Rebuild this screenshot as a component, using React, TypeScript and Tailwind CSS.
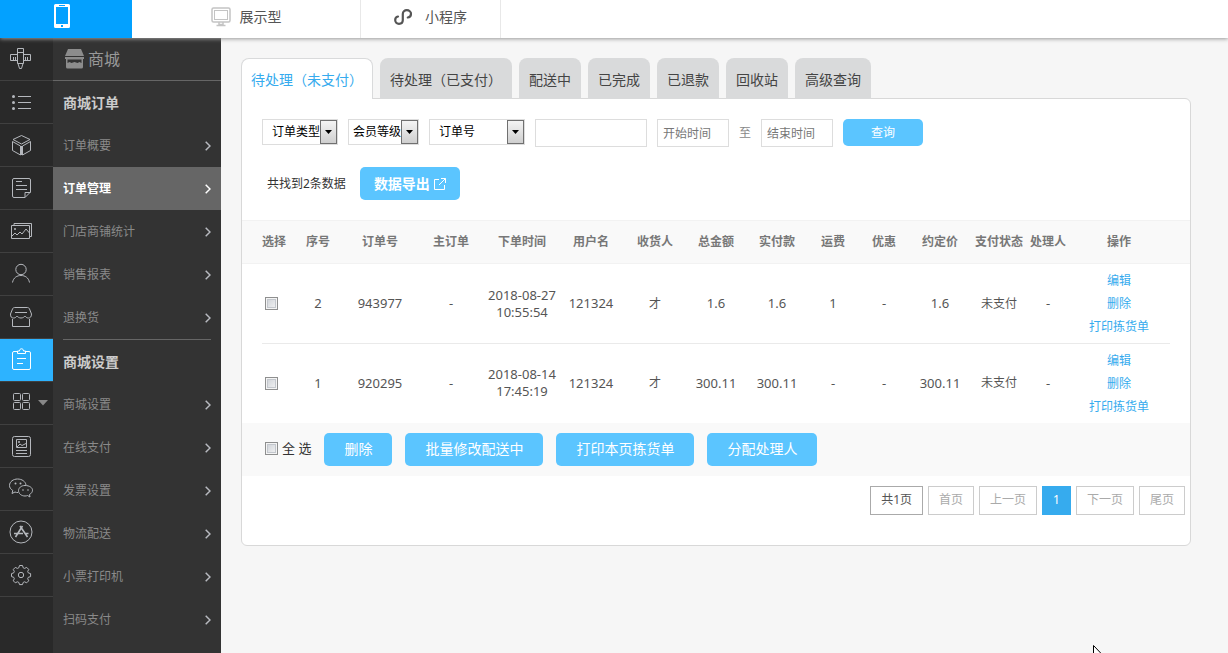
import React, { ReactNode } from "react";

function Icon({ children, className = "" }: { children: ReactNode; className?: string }) {
  return (
    <svg
      width="24"
      height="24"
      viewBox="0 0 24 24"
      fill="none"
      stroke="currentColor"
      strokeWidth="1"
      aria-hidden="true"
      className={className}
    >
      {children}
    </svg>
  );
}

const railItems: { label: string; icon: ReactNode }[] = [
  {
    label: "装修",
    icon: (
      <Icon>
        <path d="M8.500 1.500h6v15h-6zM8.500 5.500h6M8.500 7.500h-7v6h7M14.500 7.500h7v6h-7M4.500 10v3M6.500 10v3M16.500 10v3M18.500 10v3M9 16.500l1.500 5h2l1.500-5" />
      </Icon>
    ),
  },
  {
    label: "列表",
    icon: (
      <Icon>
        <path d="M9 6.500h13M9 12.500h13M9 18.500h13" />
        <g fill="currentColor" stroke="none">
          <circle cx="4.500" cy="6.500" r="1.500" />
          <circle cx="4.500" cy="12.500" r="1.500" />
          <circle cx="4.500" cy="18.500" r="1.500" />
        </g>
      </Icon>
    ),
  },
  {
    label: "产品",
    icon: (
      <Icon>
        <path d="M12.500 2.500l8.500 4-8.500 4.500L4 6.500zM3.500 8.500l8 4.500v9l-8-4.500zM21.500 8.500l-8 4.500v9l8-4.500zM12.500 13v9" />
      </Icon>
    ),
  },
  {
    label: "文章",
    icon: (
      <Icon>
        <path d="M5 2.500h15a1.500 1.500 0 0 1 1.500 1.500v12l-5.500 5.500H5A1.500 1.500 0 0 1 3.500 20V4A1.500 1.500 0 0 1 5 2.500zM7 5.500h6M7 9.500h11M7 13.500h11M16 21.500v-5h5.500" />
      </Icon>
    ),
  },
  {
    label: "图片",
    icon: (
      <Icon>
        <path d="M2.500 6.500h18v13h-18zM5 6V4.500h17.500v13H21M3 17l3-3 2 2 3-3 2 2 4-5 3.500 4" />
        <circle cx="6" cy="10" r="1" fill="currentColor" stroke="none" />
      </Icon>
    ),
  },
  {
    label: "会员",
    icon: (
      <Icon>
        <circle cx="12" cy="7.500" r="5.200" />
        <path d="M3.500 20.500c1-5 4.500-7 8.500-7s7.500 2 8.500 7" />
      </Icon>
    ),
  },
  {
    label: "门店",
    icon: (
      <Icon>
        <path d="M5.500 2.500h13c1 0 1.500.5 2 1.500l2 5c0 3-1.500 4-3 4-2 0-2.500-1-3.500-2-1 1-2 2-4 2s-3-1-4-2c-1 1-1.500 2-3.500 2s-3-1-3-4l2-5c.5-1 1-1.500 2-1.500zM6 7.500h12M3.500 14v7.500h17V14" />
      </Icon>
    ),
  },
  {
    label: "商城",
    icon: (
      <Icon>
        <path d="M8 3.500H5A1.500 1.500 0 0 0 3.500 5v15A1.500 1.500 0 0 0 5 21.500h15a1.500 1.500 0 0 0 1.500-1.500V5A1.500 1.500 0 0 0 20 3.500h-3M8.500 5.500V3h2c0-3 4-3 4 0h2v2.500zM8 10.500h9M8 15.500h6" />
      </Icon>
    ),
  },
  {
    label: "应用",
    icon: (
      <Icon>
        <rect x="4.500" y="2.500" width="7" height="7" rx="1" />
        <rect x="13.500" y="2.500" width="7" height="7" rx="1" />
        <rect x="4.500" y="11.500" width="7" height="7" rx="1" />
        <rect x="13.500" y="11.500" width="7" height="7" rx="1" />
      </Icon>
    ),
  },
  {
    label: "页面",
    icon: (
      <Icon>
        <rect x="3.500" y="2.500" width="18" height="20" rx="2" />
        <path d="M7.500 5.500h10v8h-10zM8 13l3-3 2 1.500 4-2M7 16.500h11M7 19.500h11" />
        <circle cx="10" cy="8" r="1" fill="currentColor" stroke="none" />
      </Icon>
    ),
  },
  {
    label: "微信",
    icon: (
      <Icon>
        <path d="M9 15.500c-1 0-2 0-3-.5l-3 1.500.8-3C1.500 12 .5 10.500.5 8.500c0-4 4-6.500 8-6.500 4.500 0 8 2.500 8.500 6" />
        <path d="M16 8.500c-4 0-6.500 2.500-6.500 5.200s2.700 5.300 6.500 5.300c1 0 1.800-.2 2.500-.5l2.500 1.500-.5-2.500c1.800-1 3-2.500 3-4.300 0-2.500-3-4.700-7.500-4.700z" />
        <g fill="currentColor" stroke="none">
          <circle cx="6.500" cy="6.500" r="1" />
          <circle cx="11.500" cy="6.500" r="1" />
          <circle cx="14" cy="13" r=".8" />
          <circle cx="19" cy="13" r=".8" />
        </g>
      </Icon>
    ),
  },
  {
    label: "APP",
    icon: (
      <Icon>
        <circle cx="12" cy="12" r="11" />
        <path d="M11 6l7.500 11M13.500 6L6.500 17M5 13.500h9M16.500 13.500h3" strokeWidth="1.600" />
      </Icon>
    ),
  },
  {
    label: "设置",
    icon: (
      <Icon>
        <circle cx="12" cy="12" r="2.700" />
        <path d="M10.500 2.500h3l.7 2.300 1.300.6 2.200-1 2 2-1 2.100.6 1.400 2.300.7v3l-2.300.7-.6 1.400 1 2.100-2 2-2.200-1-1.300.6-.7 2.200h-3l-.7-2.200-1.400-.6-2.100 1-2-2 1-2.100-.6-1.400-2.200-.7v-3l2.200-.7.6-1.400-1-2.100 2-2 2.100 1 1.400-.6z" />
      </Icon>
    ),
  },
];

function Rail() {
  return (
    <nav aria-label="主导航" className="w-[53px] shrink-0 bg-[#292929]">
      {railItems.map((item) => (
        <a
          key={item.label}
          href="#"
          aria-label={item.label}
          className={
            item.label === "商城"
              ? "flex h-[43px] items-center gap-[5px] border-b border-[#404040] bg-[#2db3ff] pl-[9px] text-white"
              : "flex h-[43px] items-center gap-[5px] border-b border-[#404040] pl-[9px] text-[#b5b8bd]"
          }
        >
          {item.icon}
          {item.label === "应用" && (
            <svg width="10" height="6" viewBox="0 0 10 6" aria-hidden="true" className="shrink-0">
              <path d="M0 0h10L5 5.500z" fill="#888" />
            </svg>
          )}
        </a>
      ))}
    </nav>
  );
}

function MenuLink({ label, active = false }: { label: string; active?: boolean }) {
  return (
    <a
      href="#"
      className={
        active
          ? "flex h-[43px] items-center justify-between bg-[#666] px-[10px] font-bold text-white"
          : "flex h-[43px] items-center justify-between px-[10px] text-[#8a8a8a]"
      }
    >
      {label}
      <svg
        width="6"
        height="10"
        viewBox="0 0 6 10"
        fill="none"
        stroke="currentColor"
        strokeWidth="1.500"
        aria-hidden="true"
        className={active ? "text-white" : "text-[#b8bac0]"}
      >
        <path d="M.7.7L5 5 .7 9.300" />
      </svg>
    </a>
  );
}

const orderMenu = ["订单概要", "订单管理", "门店商铺统计", "销售报表", "退换货"];
const settingMenu = ["商城设置", "在线支付", "发票设置", "物流配送", "小票打印机", "扫码支付"];

function SubMenu() {
  return (
    <aside className="w-[168px] shrink-0 bg-[#333] text-xs">
      <div className="flex h-[43px] items-center gap-1 border-b border-[#666] pl-3 text-base text-[#999]">
        <svg width="19" height="20" viewBox="0 0 19 20" aria-hidden="true">
          <path
            d="M3 0h13l3 7H0zM0 8h19v2h-1v8a1.500 1.500 0 0 1-1.500 1.500h-14A1.500 1.500 0 0 1 1 18v-8H0z"
            fill="#8c8c8c"
          />
          <path d="M2.500 14v-3.500h14V14l-2-1-2 1-3-1-3 1-2-1z" fill="#333" />
        </svg>
        商城
      </div>
      <h2 className="flex h-[43px] items-center pl-[10px] text-sm font-bold text-[#ccc]">商城订单</h2>
      {orderMenu.map((label) => (
        <MenuLink key={label} label={label} active={label === "订单管理"} />
      ))}
      <hr className="mx-[10px] border-[#666]" />
      <h2 className="flex h-[43px] items-center pl-[10px] text-sm font-bold text-[#ccc]">商城设置</h2>
      {settingMenu.map((label) => (
        <MenuLink key={label} label={label} />
      ))}
    </aside>
  );
}

function TopBar() {
  return (
    <header className="relative z-10 flex h-[38px] bg-white text-sm text-[#555] shadow-[0_1px_4px_#999]">
      <a href="#" aria-label="手机版" className="flex w-[132px] justify-center bg-[#03a1ff] pr-2 pt-1">
        <svg width="16" height="24" viewBox="0 0 16 24" aria-hidden="true">
          <path
            fill="#fff"
            fillRule="evenodd"
            d="M1.500 0h13A1.500 1.500 0 0 1 16 1.500v21a1.500 1.500 0 0 1-1.500 1.500h-13A1.500 1.500 0 0 1 0 22.500v-21A1.500 1.500 0 0 1 1.500 0zM2 3v17h12V3zM5 1v1h6V1zM7 21v2h2v-2z"
          />
        </svg>
      </a>
      <a href="#" className="flex w-[229px] items-center justify-center gap-[9px] border-r border-[#e8e8e8] pb-1">
        <svg width="20" height="20" viewBox="0 0 20 20" fill="none" stroke="#c4c4c4" aria-hidden="true">
          <rect x="1" y="1" width="18" height="14" rx="1.500" strokeWidth="1.500" />
          <rect x="3.500" y="3.500" width="13" height="9" />
          <path d="M8 15v2.500h4V15M5.500 18.500h9" strokeWidth="1.500" />
        </svg>
        展示型
      </a>
      <a href="#" className="flex w-[140px] items-center justify-center gap-[13px] border-r border-[#e8e8e8] pb-1">
        <svg
          width="18"
          height="16"
          viewBox="0 0 18 16"
          fill="none"
          stroke="#555"
          strokeWidth="2.200"
          strokeLinecap="round"
          aria-hidden="true"
        >
          <path d="M4 7.500C2.300 7.800 1.200 9 1.200 11c0 2 1.600 3.800 3.800 3.800S8.800 13.200 8.800 11V5c0-2.200 1.700-3.800 4-3.800S17 2.800 17 4.800s-1.500 3.500-3.200 3.700" />
        </svg>
        小程序
      </a>
    </header>
  );
}

const tabs = ["待处理（未支付）", "待处理（已支付）", "配送中", "已完成", "已退款", "回收站", "高级查询"];

function SelectBox({ label, className }: { label: string; className: string }) {
  return (
    <div className="relative">
      <select
        aria-label={label}
        className={"block h-[26px] appearance-none border border-[#ddd] bg-white text-black outline-none " + className}
      >
        <option>{label}</option>
      </select>
      <span className="pointer-events-none absolute bottom-px right-px top-px flex w-[17px] items-center justify-center border border-[#707070] bg-linear-to-b from-[#f4f4f4] to-[#cfcfcf]">
        <svg width="7" height="4" viewBox="0 0 7 4" aria-hidden="true">
          <path d="M0 0h7L3.500 4z" fill="#000" />
        </svg>
      </span>
    </div>
  );
}

function CheckBox({ label }: { label: string }) {
  return (
    <input
      type="checkbox"
      aria-label={label}
      className="block size-[13px] appearance-none border border-[#8e8f8f] bg-linear-to-br from-[#cbcfd5] to-[#f6f6f6] shadow-[inset_0_0_0_1px_#f4f4f4,inset_0_0_0_2px_#c3c7cd]"
    />
  );
}

const columns: { title: string; className: string }[] = [
  { title: "选择", className: "w-[30px]" },
  { title: "序号", className: "w-[52px]" },
  { title: "订单号", className: "w-[72px]" },
  { title: "主订单", className: "w-[70px]" },
  { title: "下单时间", className: "w-[72px]" },
  { title: "用户名", className: "w-[66px]" },
  { title: "收货人", className: "w-[62px]" },
  { title: "总金额", className: "w-[60px]" },
  { title: "实付款", className: "w-[62px]" },
  { title: "运费", className: "w-[50px]" },
  { title: "优惠", className: "w-[52px]" },
  { title: "约定价", className: "w-[60px]" },
  { title: "支付状态", className: "w-[58px]" },
  { title: "处理人", className: "w-[40px]" },
  { title: "操作", className: "w-[102px]" },
];

const orders: string[][] = [
  ["2", "943977", "-", "2018-08-27 10:55:54", "121324", "才", "1.6", "1.6", "1", "-", "1.6", "未支付", "-"],
  ["1", "920295", "-", "2018-08-14 17:45:19", "121324", "才", "300.11", "300.11", "-", "-", "300.11", "未支付", "-"],
];

function OrderTable() {
  return (
    <table className="w-full table-fixed border-collapse text-center text-xs text-[#555]">
      <colgroup>
        <col className="w-5" />
        {columns.map((c) => (
          <col key={c.title} className={c.className} />
        ))}
        <col className="w-5" />
      </colgroup>
      <thead>
        <tr className="h-[43px] border-y border-[#f2f2f2] bg-[#f9f9f9] text-[#777]">
          <td />
          {columns.map((c) => (
            <th key={c.title} scope="col" className="whitespace-nowrap p-0 font-bold first-of-type:text-left">
              {c.title}
            </th>
          ))}
          <td />
        </tr>
      </thead>
      <tbody>
        {orders.map((row) => (
          <tr key={row[1]} className="group h-20 last:h-[79px]">
            <td />
            <td className="border-b border-[#eaeaea] py-0 pl-[3px] pr-0 group-last:border-0">
              <CheckBox label={"选择订单 " + row[1]} />
            </td>
            {row.map((cell, i) => (
              <td
                key={i}
                className={
                  /^[\d.: -]+$/.test(cell)
                    ? "border-b border-[#eaeaea] p-0 text-[13px] leading-[17px] group-last:border-0"
                    : "border-b border-[#eaeaea] p-0 group-last:border-0"
                }
              >
                {cell}
              </td>
            ))}
            <td className="border-b border-[#eaeaea] p-0 leading-[23px] text-[#36abee] group-last:border-0">
              <a href="#" className="block">编辑</a>
              <a href="#" className="block">删除</a>
              <a href="#" className="block">打印拣货单</a>
            </td>
            <td />
          </tr>
        ))}
      </tbody>
    </table>
  );
}

const pages: { label: string; className: string }[] = [
  { label: "首页", className: "border-[#ccc] bg-white text-[#aaa]" },
  { label: "上一页", className: "border-[#ccc] bg-white text-[#aaa]" },
  { label: "1", className: "border-[#36abee] bg-[#36abee] text-white" },
  { label: "下一页", className: "border-[#ccc] bg-white text-[#aaa]" },
  { label: "尾页", className: "border-[#ccc] bg-white text-[#aaa]" },
];

const actions = ["删除", "批量修改配送中", "打印本页拣货单", "分配处理人"];

function Main() {
  return (
    <main className="min-w-0 flex-1 pb-10 pl-5 pr-[37px] pt-5">
      <div role="tablist" className="-mb-px flex gap-[7px] text-sm">
        {tabs.map((tab, i) => (
          <button
            key={tab}
            type="button"
            role="tab"
            aria-selected={i === 0}
            className={
              i === 0
                ? "relative h-[41px] whitespace-nowrap rounded-t-lg border border-b-0 border-[#d9dadb] bg-white px-[9px] pt-px text-[#36abee]"
                : "h-[41px] whitespace-nowrap rounded-t-lg bg-[#d9dadb] px-[10px] pt-0.5 text-[#444]"
            }
          >
            {tab}
          </button>
        ))}
      </div>
      <section className="rounded-md rounded-tl-none border border-[#d8d8d8] bg-white pb-[30px] text-xs">
        <form className="flex items-start gap-[10px] px-5 pt-5">
          <SelectBox label="订单类型" className="w-[76px] pl-[9px]" />
          <SelectBox label="会员等级" className="w-[71px] pl-1" />
          <SelectBox label="订单号" className="w-24 pl-[9px]" />
          <input type="text" aria-label="关键词" className="h-7 w-28 border border-[#ddd] px-[5px] outline-none" />
          <input
            type="text"
            aria-label="开始时间"
            placeholder="开始时间"
            className="h-7 w-[72px] border border-[#ddd] px-[5px] outline-none placeholder:text-[#777]"
          />
          <span className="leading-7 text-[#888]">至</span>
          <input
            type="text"
            aria-label="结束时间"
            placeholder="结束时间"
            className="h-7 w-[72px] border border-[#ddd] px-[5px] outline-none placeholder:text-[#777]"
          />
          <button type="button" className="h-[27px] w-20 rounded-[5px] bg-[#5bc5ff] text-white">
            查询
          </button>
        </form>
        <div className="mt-5 flex items-center gap-[14px] pl-[25px]">
          <span className="text-[#333]">共找到2条数据</span>
          <button
            type="button"
            className="flex h-[33px] w-[100px] items-center justify-center gap-1 rounded-[5px] bg-[#5bc5ff] text-sm font-bold text-white"
          >
            数据导出
            <svg
              width="12"
              height="12"
              viewBox="0 0 12 12"
              fill="none"
              stroke="currentColor"
              aria-hidden="true"
            >
              <path d="M5 1.500H.5v10h10V7M7 .5h4.500V5M11.500.5L5 7" />
            </svg>
          </button>
        </div>
        <div className="mt-5">
          <OrderTable />
        </div>
        <div className="flex h-[53px] items-center bg-[#f9f9f9] pl-[23px]">
          <label className="mr-[13px] flex items-center gap-1 text-[13px] text-[#333]">
            <CheckBox label="全选" />
            全 选
          </label>
          <div className="flex gap-[13px]">
            {actions.map((label) => (
              <button key={label} type="button" className="h-[33px] rounded-[5px] bg-[#5bc5ff] px-5 text-sm text-white">
                {label}
              </button>
            ))}
          </div>
        </div>
        <nav aria-label="分页" className="mt-[10px] flex justify-end gap-[5px] pr-[5px]">
          <span className="flex h-[29px] items-center border border-[#aaa] px-[10px] text-[#555]">共1页</span>
          {pages.map((p) => (
            <a key={p.label} href="#" className={"flex h-[29px] items-center border px-[10px] " + p.className}>
              {p.label}
            </a>
          ))}
        </nav>
      </section>
    </main>
  );
}

export default function App() {
  return (
    <div className="relative flex min-h-screen flex-col overflow-hidden bg-[#f6f6f6] font-['Noto_Sans','Noto_Sans_CJK_SC',sans-serif]">
      <TopBar />
      <div className="flex flex-1">
        <Rail />
        <SubMenu />
        <Main />
      </div>
      <svg
        width="12"
        height="19"
        viewBox="0 0 12 19"
        aria-hidden="true"
        className="absolute left-[1093px] top-[645px]"
      >
        <path d="M.5.5v16l4-4 2.500 6 2-1-2.500-5.500h5z" fill="#fff" stroke="#000" />
      </svg>
    </div>
  );
}
